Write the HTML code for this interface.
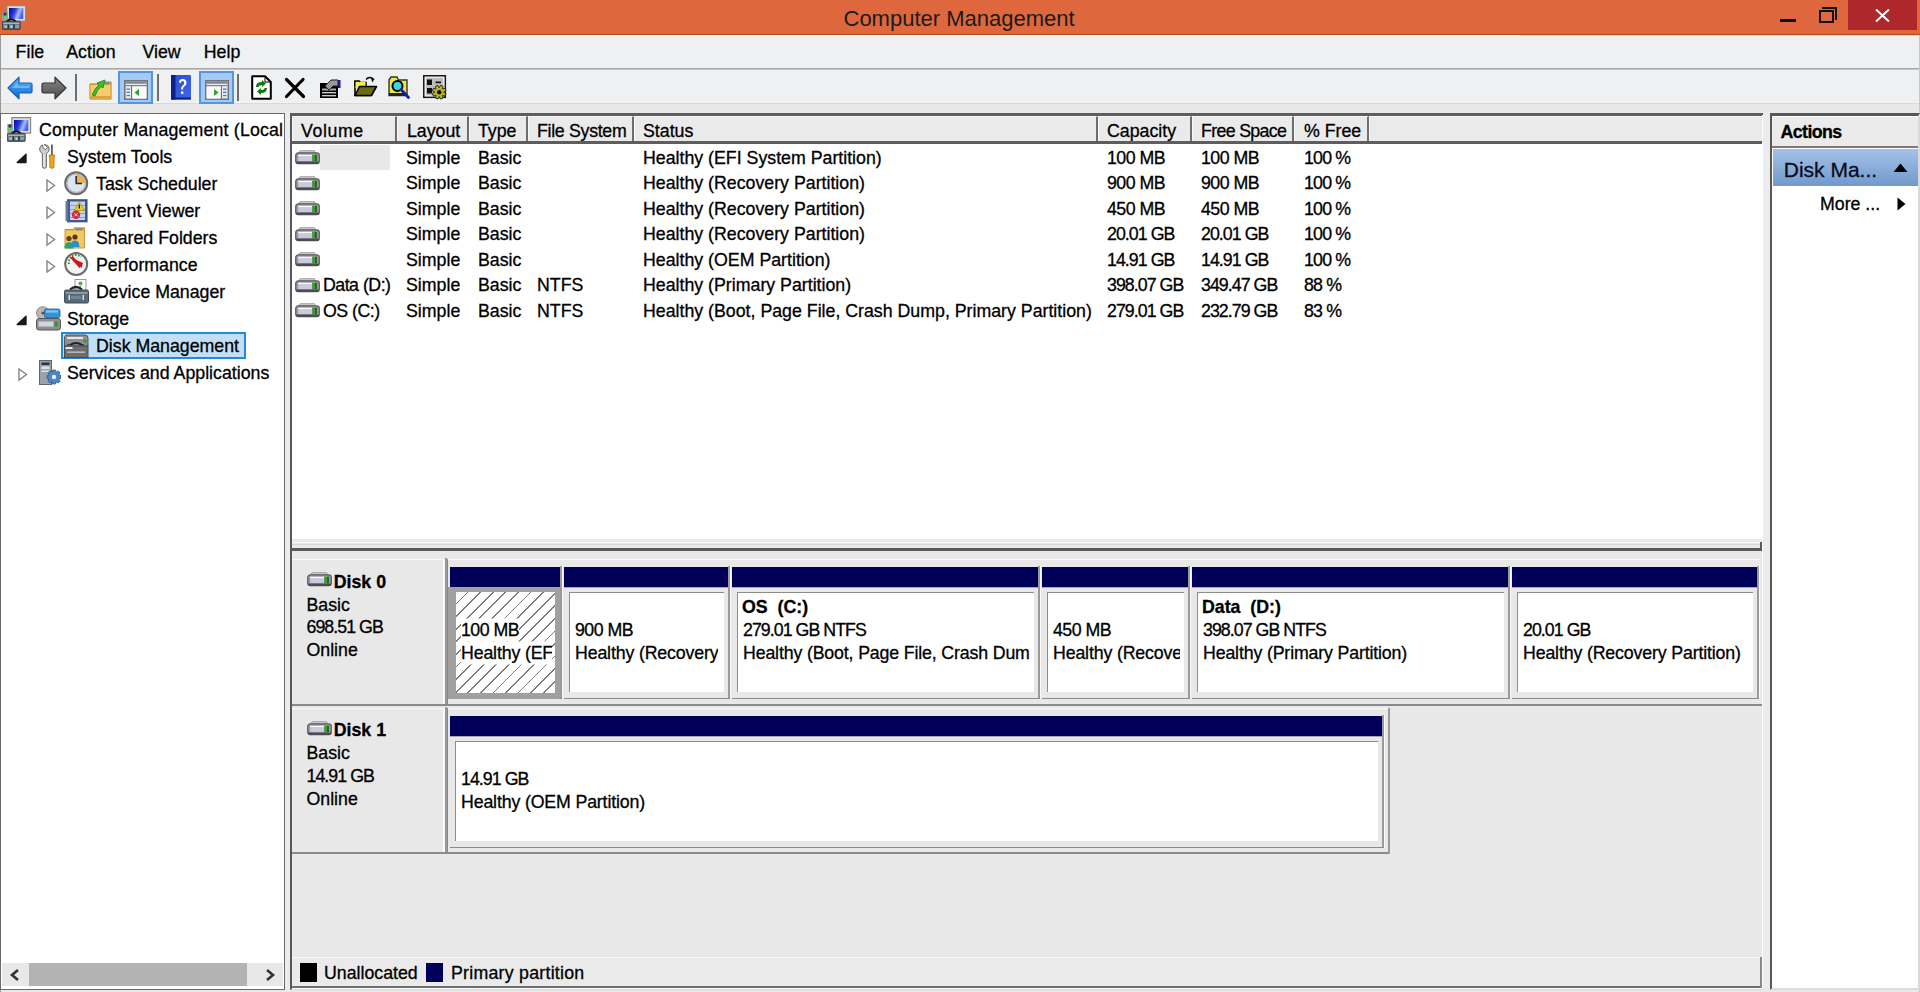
<!DOCTYPE html>
<html><head><meta charset="utf-8"><style>
html,body{margin:0;padding:0;}
body{width:1920px;height:992px;overflow:hidden;position:relative;background:#E8E8E8;font-family:"Liberation Sans",sans-serif;}
div{position:absolute;}
.t{white-space:nowrap;line-height:20px;color:#000;-webkit-text-stroke:0.3px currentColor;}
.hatch{background:repeating-linear-gradient(-45deg,#fff 0px,#fff 7.7px,#7c7c7c 7.7px,#7c7c7c 8.9px);}
.hd{width:24px;height:14px;}
.ic{width:24px;height:24px;}
</style></head><body>
<div style="position:absolute;left:0px;top:0px;width:1920px;height:35px;background:#DF673E"></div>
<div style="position:absolute;left:0px;top:34px;width:1920px;height:1px;background:#B4481F"></div>
<div class="t" style="left:843.5px;top:8.78px;font-size:22px;color:#1b1b1b;-webkit-text-stroke:0">Computer Management</div>
<div style="position:absolute;left:1780px;top:19px;width:16px;height:3px;background:#111"></div>
<div style="position:absolute;left:1822px;top:7px;width:15px;height:13px;border:2px solid #111;border-left:0;border-bottom:0;box-sizing:border-box"></div>
<div style="position:absolute;left:1819px;top:10px;width:15px;height:13px;border:2px solid #111;box-sizing:border-box;background:#DF673E"></div>
<div style="position:absolute;left:1848px;top:0px;width:69px;height:30px;background:#AD272B"></div>
<svg style="position:absolute;left:1875px;top:9px" width="15" height="13"><path d="M1 0.5L14 12.5M14 0.5L1 12.5" stroke="#fff" stroke-width="2"/></svg>
<svg style="position:absolute;left:2px;top:4.5px" width="25" height="25" viewBox="0 0 25 25">
<defs><linearGradient id="csw" x1="0" y1="0" x2="1" y2="0.3"><stop offset="0" stop-color="#06089a"/><stop offset="0.45" stop-color="#2a3ee0"/><stop offset="0.75" stop-color="#a9bff7"/><stop offset="1" stop-color="#4d62e8"/></linearGradient></defs>
<rect x="4.8" y="0.6" width="18.8" height="15.6" fill="#dcdccf" stroke="#8a8a80" stroke-width="1.2"/>
<rect x="7" y="3" width="14.3" height="11" fill="url(#csw)"/>
<rect x="0.3" y="7" width="5.5" height="9.5" fill="#9aa2a8"/>
<rect x="0.3" y="10.8" width="5.5" height="2.2" fill="#5ad25a"/>
<rect x="1.5" y="7.5" width="3" height="3" fill="#3a3a3a"/>
<path d="M4.5 17 Q9 11.8 13.8 16.5" fill="none" stroke="#151515" stroke-width="2.2"/>
<rect x="0.4" y="16.4" width="17.8" height="8.2" rx="0.8" fill="#55676e" stroke="#2e3b40" stroke-width="0.8"/>
<rect x="1.2" y="17.6" width="16.2" height="1.6" fill="#a9b6ba"/>
<rect x="1.5" y="20" width="15.6" height="3" fill="#8d9ca2"/>
<rect x="5.5" y="19.5" width="1.6" height="4" fill="#1e2a2e"/><rect x="11.2" y="19.5" width="1.6" height="4" fill="#1e2a2e"/>
<rect x="3.5" y="21" width="1.2" height="1.5" fill="#e8eef0"/><rect x="9" y="21" width="1.2" height="1.5" fill="#e8eef0"/>
</svg>
<div style="position:absolute;left:0px;top:35px;width:1920px;height:68px;background:#EEF0F2"></div>
<div style="position:absolute;left:0px;top:35px;width:1920px;height:1px;background:#F6FAFC"></div>
<div style="position:absolute;left:1520px;top:35px;width:400px;height:1px;background:#D3D9E0"></div>
<div style="position:absolute;left:0px;top:68px;width:1920px;height:1px;background:#A9A9A9"></div>
<div class="t" style="left:15.6px;top:41.60px;font-size:17.75px;color:#000;">File</div>
<div class="t" style="left:66.25px;top:41.60px;font-size:17.75px;color:#000;">Action</div>
<div class="t" style="left:142.5px;top:41.60px;font-size:17.75px;color:#000;">View</div>
<div class="t" style="left:203.75px;top:41.60px;font-size:17.75px;color:#000;">Help</div>
<div style="position:absolute;left:0px;top:103px;width:1920px;height:889px;background:#E8E8E8"></div>
<div style="position:absolute;left:0px;top:102px;width:1920px;height:1px;background:#F3F4F6"></div>
<div style="position:absolute;left:0px;top:103px;width:1920px;height:1px;background:#D9D9DB"></div>
<div style="position:absolute;left:0px;top:69px;width:1920px;height:1px;background:#C4C4C8"></div>
<div style="position:absolute;left:0px;top:35px;width:1px;height:957px;background:#9a9a9a"></div>
<div style="position:absolute;left:1919px;top:35px;width:1px;height:957px;background:#c8c8c8"></div>
<div style="position:absolute;left:118px;top:71px;width:35px;height:33px;background:#A5C9F3;border:2px solid #5596E4;box-sizing:border-box"></div>
<div style="position:absolute;left:199px;top:71px;width:35px;height:33px;background:#A5C9F3;border:2px solid #5596E4;box-sizing:border-box"></div>
<div style="position:absolute;left:75px;top:74px;width:2px;height:27px;background:#6f6f6f"></div>
<div style="position:absolute;left:157px;top:74px;width:2px;height:27px;background:#6f6f6f"></div>
<div style="position:absolute;left:237px;top:74px;width:2px;height:27px;background:#6f6f6f"></div>
<svg style="position:absolute;left:7px;top:76px" width="26" height="24" viewBox="0 0 26 24">
<defs><linearGradient id="ba" x1="0" y1="0" x2="0" y2="1"><stop offset="0" stop-color="#5fc0ff"/><stop offset="1" stop-color="#0a62cc"/></linearGradient></defs>
<path d="M1 12 L12 1.2 V7 H23.5 Q25 7 25 8.5 V15.5 Q25 17 23.5 17 H12 V22.8Z" fill="url(#ba)" stroke="#1b5fb5" stroke-width="1.2" stroke-linejoin="round"/>
<path d="M5 12 L10.5 7 V10 H22 V12Z" fill="#9fe0ff" opacity="0.5"/>
</svg>
<svg style="position:absolute;left:41px;top:76px" width="26" height="24" viewBox="0 0 26 24">
<defs><linearGradient id="fa" x1="0" y1="0" x2="0" y2="1"><stop offset="0" stop-color="#8a8a8a"/><stop offset="1" stop-color="#4a4a4a"/></linearGradient></defs>
<path d="M25 12 L14 1.2 V7 H2.5 Q1 7 1 8.5 V15.5 Q1 17 2.5 17 H14 V22.8Z" fill="url(#fa)" stroke="#353535" stroke-width="1.2" stroke-linejoin="round"/>
</svg>
<svg style="position:absolute;left:89px;top:77px" width="24" height="24" viewBox="0 0 24 24">
<path d="M1 7 H14 L15.5 5 H22 V22 H1Z" fill="#e9b14a" stroke="#b07b22" stroke-width="1"/>
<rect x="1.5" y="8" width="20" height="13.5" fill="#f6cd6a"/>
<rect x="1.5" y="19" width="20" height="2.5" fill="#d9a140"/>
<path d="M3 18 Q6 11 10 8 L8 6 L16 3 L14 11 L12 9.5 Q8 13 6 19Z" fill="#35c22a" stroke="#1d7d16" stroke-width="0.8"/>
<rect x="16" y="5.5" width="4" height="2" fill="#4a8fd8"/>
</svg>
<svg style="position:absolute;left:124px;top:80px" width="24" height="20" viewBox="0 0 24 20">
<rect x="0.8" y="0.8" width="22.5" height="18.4" fill="#e9ecef" stroke="#6b7178" stroke-width="1.5"/>
<rect x="1.5" y="1.5" width="21" height="2.2" fill="#7d838a"/>
<rect x="1.5" y="5" width="21" height="1.2" fill="#7d838a"/>
<rect x="7" y="6.2" width="1.3" height="13" fill="#6b7178"/>
<rect x="8.3" y="6.8" width="14" height="11.8" fill="#fafafa"/>
<rect x="2.5" y="8.5" width="3.5" height="1.3" fill="#3f7fd0"/><rect x="2.5" y="11.7" width="3.5" height="1.3" fill="#3f7fd0"/><rect x="2.5" y="14.9" width="3.5" height="1.3" fill="#3f7fd0"/>
<path d="M15 9 L10.5 12.5 L15 16Z" fill="#2aa52a"/></svg>
<svg style="position:absolute;left:171px;top:75px" width="20" height="25" viewBox="0 0 20 25">
<defs><linearGradient id="hb" x1="0" y1="0" x2="1" y2="1"><stop offset="0" stop-color="#2a4fd0"/><stop offset="1" stop-color="#3f66e6"/></linearGradient></defs>
<rect x="0" y="0" width="20" height="24.5" rx="1" fill="url(#hb)"/>
<rect x="0" y="0" width="4.5" height="24.5" fill="#0c1f8c"/>
<rect x="0" y="22.5" width="20" height="2" fill="#0c1f8c"/>
<path d="M8 7.5 Q8 4 11.5 4 Q15.5 4 15.5 7.8 Q15.5 10.3 13 11.8 Q12 12.5 12 14.5 H10 Q10 11.5 12 10.2 Q13.3 9.3 13.3 8 Q13.3 6 11.6 6 Q10 6 10 8Z" fill="#fff"/>
<rect x="10" y="16.5" width="2.4" height="2.4" fill="#fff"/>
</svg>
<svg style="position:absolute;left:205px;top:80px" width="24" height="20" viewBox="0 0 24 20">
<rect x="0.8" y="0.8" width="22.5" height="18.4" fill="#e9ecef" stroke="#6b7178" stroke-width="1.5"/>
<rect x="1.5" y="1.5" width="21" height="2.2" fill="#7d838a"/>
<rect x="1.5" y="5" width="21" height="1.2" fill="#7d838a"/>
<rect x="15.7" y="6.2" width="1.3" height="13" fill="#6b7178"/>
<rect x="1.6" y="6.8" width="14" height="11.8" fill="#fafafa"/>
<rect x="18" y="8.5" width="3.5" height="1.3" fill="#3f7fd0"/><rect x="18" y="11.7" width="3.5" height="1.3" fill="#3f7fd0"/><rect x="18" y="14.9" width="3.5" height="1.3" fill="#3f7fd0"/>
<path d="M9 9 L13.5 12.5 L9 16Z" fill="#2aa52a"/></svg>
<svg style="position:absolute;left:251px;top:75px" width="21" height="25" viewBox="0 0 21 25">
<path d="M1.2 1.2 H14 L19.8 7 V23.8 H1.2Z" fill="#fff" stroke="#000" stroke-width="2" stroke-linejoin="round"/>
<path d="M14 1.2 V7 H19.8" fill="none" stroke="#000" stroke-width="1"/>
<path d="M5 12 Q5 7 11 7 V5 L15 8.5 L11 12 V10 Q7.5 10 7.5 12Z" fill="#0f7a0f"/>
<path d="M16 13 Q16 18 10 18 V20 L6 16.5 L10 13 V15 Q13.5 15 13.5 13Z" fill="#0f7a0f"/>
</svg>
<svg style="position:absolute;left:284px;top:77px" width="22" height="22" viewBox="0 0 22 22">
<path d="M2.5 2.5 L19.5 19.5 M19 2.5 L2.5 19.5" stroke="#000" stroke-width="3.2" stroke-linecap="round"/>
</svg>
<svg style="position:absolute;left:319px;top:77px" width="24" height="22" viewBox="0 0 24 22">
<rect x="1" y="6" width="18" height="15" fill="#000"/>
<rect x="3" y="11.5" width="14" height="2" fill="#aaa"/>
<rect x="3" y="15" width="14" height="1.4" fill="#ccc"/>
<rect x="3" y="18" width="14" height="1.4" fill="#ccc"/>
<path d="M6 9 L12 3 L19 3 L19 9 L14 9 L10 13Z" fill="#9a9a9a" stroke="#222" stroke-width="1"/>
<rect x="19" y="3" width="2.5" height="8" fill="#1a1a8a"/>
</svg>
<svg style="position:absolute;left:354px;top:76px" width="24" height="21" viewBox="0 0 24 21">
<path d="M1 5 H5 L6.5 6.5 H12 V9 H1Z" fill="#f4f04a" stroke="#000" stroke-width="1.6"/>
<path d="M1 5 V19.5 H17" fill="none" stroke="#000" stroke-width="1.6"/>
<path d="M1.5 9 H11 V10" fill="#f4f04a"/>
<rect x="1.5" y="6" width="10" height="6" fill="#f4f04a"/>
<path d="M1 19.5 L5.5 10.5 H22.5 L17.5 19.5Z" fill="#6b6a0e" stroke="#000" stroke-width="1.6" stroke-linejoin="round"/>
<path d="M12 3.5 Q15 0 18.5 2.5" fill="none" stroke="#000" stroke-width="1.3"/>
<path d="M17 1 L20.5 3 L18.2 6.5Z" fill="#000"/>
</svg>
<svg style="position:absolute;left:388px;top:76px" width="24" height="24" viewBox="0 0 24 24">
<path d="M1 4 L3 1 H9 L10.5 4 H19 V19.5 H1Z" fill="#e7e64a" stroke="#333" stroke-width="1.4"/>
<rect x="1" y="17" width="18" height="3" fill="#222"/>
<circle cx="9.5" cy="10" r="5" fill="#3cd6e0" stroke="#000" stroke-width="2"/>
<path d="M13 13.5 L20.5 21.5" stroke="#1a1ab0" stroke-width="2.8" stroke-linecap="round"/>
</svg>
<svg style="position:absolute;left:423px;top:75px" width="25" height="25" viewBox="0 0 25 25">
<rect x="0.8" y="0.8" width="21.5" height="21.5" fill="#bdbdbd" stroke="#1a1a1a" stroke-width="1.6"/>
<rect x="2.3" y="2.3" width="18.5" height="18.5" fill="none" stroke="#f2f2f2" stroke-width="1.1"/>
<rect x="4" y="4.5" width="5" height="5.5" fill="#111"/>
<rect x="4" y="13" width="5" height="5.5" fill="#111"/>
<rect x="12.5" y="6.5" width="5.5" height="1.7" fill="#111"/>
<path d="M20.70 17.35 L23.07 18.54 L22.01 21.11 L19.48 20.28 L19.28 20.48 L20.11 23.01 L17.54 24.07 L16.35 21.70 L16.05 21.70 L14.86 24.07 L12.29 23.01 L13.12 20.48 L12.92 20.28 L10.39 21.11 L9.33 18.54 L11.70 17.35 L11.70 17.05 L9.33 15.86 L10.39 13.29 L12.92 14.12 L13.12 13.92 L12.29 11.39 L14.86 10.33 L16.05 12.70 L16.35 12.70 L17.54 10.33 L20.11 11.39 L19.28 13.92 L19.48 14.12 L22.01 13.29 L23.07 15.86 L20.70 17.05Z" fill="#bdb82a" stroke="#1a1a1a" stroke-width="0.9"/>
<circle cx="16.2" cy="17.2" r="2.2" fill="#111"/>
</svg>
<div style="position:absolute;left:0px;top:113px;width:285px;height:877px;background:#fff;border:1px solid #6a6a6a;box-sizing:border-box"></div>
<div style="position:absolute;left:2px;top:963px;width:281px;height:23px;background:#E8E8E8"></div>
<div style="position:absolute;left:29px;top:963px;width:218px;height:23px;background:#B3B3B3"></div>
<svg style="position:absolute;left:9px;top:968px" width="12" height="14"><path d="M9 2L3 7L9 12" stroke="#333" stroke-width="2.6" fill="none"/></svg>
<svg style="position:absolute;left:264px;top:968px" width="12" height="14"><path d="M3 2L9 7L3 12" stroke="#333" stroke-width="2.6" fill="none"/></svg>
<div style="position:absolute;left:1px;top:113px;width:282px;height:850px;overflow:hidden">
<div class="t" style="left:38px;top:6.85px;font-size:17.75px;color:#000;letter-spacing:0.17px">Computer Management (Local)</div>
<svg style="position:absolute;left:6px;top:4px" width="25" height="25" viewBox="0 0 25 25">
<defs><linearGradient id="csa" x1="0" y1="0" x2="1" y2="0.3"><stop offset="0" stop-color="#06089a"/><stop offset="0.45" stop-color="#2a3ee0"/><stop offset="0.75" stop-color="#a9bff7"/><stop offset="1" stop-color="#4d62e8"/></linearGradient></defs>
<rect x="4.8" y="0.6" width="18.8" height="15.6" fill="#dcdccf" stroke="#8a8a80" stroke-width="1.2"/>
<rect x="7" y="3" width="14.3" height="11" fill="url(#csa)"/>
<rect x="0.3" y="7" width="5.5" height="9.5" fill="#9aa2a8"/>
<rect x="0.3" y="10.8" width="5.5" height="2.2" fill="#5ad25a"/>
<rect x="1.5" y="7.5" width="3" height="3" fill="#3a3a3a"/>
<path d="M4.5 17 Q9 11.8 13.8 16.5" fill="none" stroke="#151515" stroke-width="2.2"/>
<rect x="0.4" y="16.4" width="17.8" height="8.2" rx="0.8" fill="#55676e" stroke="#2e3b40" stroke-width="0.8"/>
<rect x="1.2" y="17.6" width="16.2" height="1.6" fill="#a9b6ba"/>
<rect x="1.5" y="20" width="15.6" height="3" fill="#8d9ca2"/>
<rect x="5.5" y="19.5" width="1.6" height="4" fill="#1e2a2e"/><rect x="11.2" y="19.5" width="1.6" height="4" fill="#1e2a2e"/>
<rect x="3.5" y="21" width="1.2" height="1.5" fill="#e8eef0"/><rect x="9" y="21" width="1.2" height="1.5" fill="#e8eef0"/>
</svg>
<div class="t" style="left:66px;top:33.85px;font-size:17.75px;color:#000;">System Tools</div>
<svg style="position:absolute;left:15px;top:39.5px" width="12" height="11"><path d="M10 1.2L10 9.6L1.2 9.6Z" fill="#1a1a1a" stroke="#1a1a1a" stroke-width="1.4" stroke-linejoin="round"/></svg>
<svg style="position:absolute;left:38px;top:31px" width="18" height="25" viewBox="0 0 18 25">
<path d="M5.2 0.6 Q9.8 0.6 10.2 5 Q10.2 8.2 7.4 9.6 V22.6 Q7.4 24.3 5.4 24.3 Q3.4 24.3 3.4 22.6 V9.6 Q0.6 8.2 0.6 5 Q0.9 1.6 3.6 0.9 L4.2 4.2 L6.4 5.6 L8.6 3.2Z" fill="#cdcdcd" stroke="#6a6a6a" stroke-width="1"/>
<rect x="4.4" y="10.5" width="1.3" height="12" fill="#f0f0f0"/>
<rect x="12" y="0.5" width="1.8" height="11" fill="#5f5f5f"/>
<path d="M10.3 11 H15.5 V13.5 H15 V23 Q15 24.3 12.9 24.3 Q10.8 24.3 10.8 23 V13.5 H10.3Z" fill="#f0a51a" stroke="#b76d00" stroke-width="0.8"/>
</svg>
<div class="t" style="left:95px;top:60.85px;font-size:17.75px;color:#000;">Task Scheduler</div>
<svg style="position:absolute;left:45px;top:66px" width="10" height="14"><path d="M1 1L8.5 6.5L1 12Z" fill="none" stroke="#858585" stroke-width="1.4"/></svg>
<svg style="position:absolute;left:63px;top:58px" width="25" height="25" viewBox="0 0 25 25">
<circle cx="12.2" cy="12.2" r="11" fill="#dce6f0" stroke="#6b6b6b" stroke-width="2"/>
<circle cx="12.2" cy="12.2" r="9.2" fill="none" stroke="#a9a9a9" stroke-width="1"/>
<path d="M12.2 12.2 V3 A9.2 9.2 0 0 1 21.4 12.2Z" fill="#e6b45c"/>
<path d="M12.2 5 V12.5 H18" fill="none" stroke="#2a2a2a" stroke-width="1.6"/>
</svg>
<div class="t" style="left:95px;top:87.85px;font-size:17.75px;color:#000;">Event Viewer</div>
<svg style="position:absolute;left:45px;top:93px" width="10" height="14"><path d="M1 1L8.5 6.5L1 12Z" fill="none" stroke="#858585" stroke-width="1.4"/></svg>
<svg style="position:absolute;left:64px;top:86px" width="23" height="24" viewBox="0 0 23 24">
<rect x="2.5" y="0.8" width="19.5" height="22" fill="#3d5c9b" stroke="#2c477c" stroke-width="1"/>
<rect x="5" y="2.5" width="15" height="18.5" fill="#c6d3ea"/>
<rect x="5" y="6" width="15" height="1" fill="#8aa0c8"/><rect x="5" y="10" width="15" height="1" fill="#8aa0c8"/><rect x="5" y="14" width="15" height="1" fill="#8aa0c8"/><rect x="5" y="18" width="15" height="1" fill="#8aa0c8"/>
<rect x="0.5" y="2" width="2.5" height="20" fill="#6a7a90"/>
<path d="M14.3 3 L19.5 11.5 H9Z" fill="#e4cf2e" stroke="#9a8a10" stroke-width="0.7"/>
<rect x="13.6" y="5.5" width="1.4" height="4" fill="#222"/>
<circle cx="11" cy="15.8" r="4.2" fill="#d42a38"/>
<path d="M9.5 14.3 L12.5 17.3 M12.5 14.3 L9.5 17.3" stroke="#fff" stroke-width="1"/>
</svg>
<div class="t" style="left:95px;top:114.85px;font-size:17.75px;color:#000;">Shared Folders</div>
<svg style="position:absolute;left:45px;top:120px" width="10" height="14"><path d="M1 1L8.5 6.5L1 12Z" fill="none" stroke="#858585" stroke-width="1.4"/></svg>
<svg style="position:absolute;left:63px;top:114px" width="22" height="23" viewBox="0 0 22 23">
<path d="M1 2.5 H9 L10.5 0.8 H20.5 V21 H1Z" fill="#d9a543" stroke="#b88425" stroke-width="0.8"/>
<rect x="1.5" y="3.5" width="18.5" height="17" fill="#f3c95f"/>
<rect x="12" y="1.5" width="6" height="1.8" fill="#4a8fd8"/>
<circle cx="5" cy="11.5" r="2.6" fill="#6b3a1e"/>
<path d="M0.5 21.5 Q0.5 15 5 15 Q9.5 15 9.5 21.5Z" fill="#2aa860"/>
<circle cx="11" cy="10" r="2.6" fill="#5b3418"/>
<path d="M6.5 20 Q6.5 13.5 11 13.5 Q15.5 13.5 15.5 20Z" fill="#2f8ed0"/>
</svg>
<div class="t" style="left:95px;top:141.85px;font-size:17.75px;color:#000;">Performance</div>
<svg style="position:absolute;left:45px;top:147px" width="10" height="14"><path d="M1 1L8.5 6.5L1 12Z" fill="none" stroke="#858585" stroke-width="1.4"/></svg>
<svg style="position:absolute;left:63px;top:139px" width="25" height="25" viewBox="0 0 25 25">
<circle cx="12.2" cy="12" r="11" fill="#f4f4f4" stroke="#6b6b6b" stroke-width="2"/>
<path d="M5 12 A7.2 7.2 0 0 1 17 5" fill="none" stroke="#3a8a3a" stroke-width="2" stroke-dasharray="1.5 1.5"/>
<path d="M7 5.5 L17.5 16 L19 11 Z" fill="#d0161e"/>
<path d="M7.5 5 L16.5 15" stroke="#d0161e" stroke-width="3"/>
</svg>
<div class="t" style="left:95px;top:168.85px;font-size:17.75px;color:#000;">Device Manager</div>
<svg style="position:absolute;left:63px;top:166px" width="25" height="25" viewBox="0 0 25 25">
<rect x="11" y="0.5" width="11" height="13" fill="#fff" stroke="#9a9a9a" stroke-width="1"/>
<circle cx="16.5" cy="4.5" r="2" fill="#3db33d"/>
<rect x="15.8" y="5" width="1.4" height="7" fill="#9ac09a"/>
<path d="M6 10.5 Q12 5.5 18 10.5" fill="none" stroke="#222" stroke-width="2.2"/>
<rect x="0.5" y="11" width="24" height="13" rx="1.5" fill="#576a78" stroke="#3e4c57" stroke-width="1"/>
<rect x="1.5" y="13" width="22" height="2" fill="#8a9aa6"/>
<rect x="4.5" y="16" width="1.5" height="5" fill="#d8dde2"/><rect x="18.5" y="16" width="1.5" height="5" fill="#d8dde2"/>
<rect x="7" y="17" width="10" height="3" fill="#74858f"/>
</svg>
<div class="t" style="left:66px;top:195.85px;font-size:17.75px;color:#000;">Storage</div>
<svg style="position:absolute;left:15px;top:201.5px" width="12" height="11"><path d="M10 1.2L10 9.6L1.2 9.6Z" fill="#1a1a1a" stroke="#1a1a1a" stroke-width="1.4" stroke-linejoin="round"/></svg>
<svg style="position:absolute;left:35px;top:193px" width="25" height="25" viewBox="0 0 25 25">
<circle cx="6.8" cy="7" r="6.3" fill="#b8b8b8" stroke="#777" stroke-width="0.8"/>
<circle cx="6.8" cy="7" r="1.5" fill="#555"/>
<rect x="8.5" y="3" width="15.5" height="8.5" rx="1.5" fill="#2f95d6" stroke="#1b5f96" stroke-width="0.8"/>
<rect x="10" y="4.3" width="12" height="2.3" fill="#7fc8f0"/>
<path d="M3 12.5 H22 Q24.5 12.5 24.5 15 V21.5 Q24.5 24 22 24 H3 Q0.5 24 0.5 21.5 V15 Q0.5 12.5 3 12.5Z" fill="#8f8f8f" stroke="#555" stroke-width="1"/>
<rect x="2.5" y="15.5" width="15" height="5" fill="#d3d6e2"/>
<rect x="18.5" y="15.5" width="3.3" height="5" fill="#2f9b2f"/>
</svg>
<div style="position:absolute;left:60px;top:218.5px;width:185px;height:27.5px;background:#C1E0F8;border:2px solid #258AD6;box-sizing:border-box"></div>
<div class="t" style="left:95px;top:222.85px;font-size:17.75px;color:#000;">Disk Management</div>
<svg style="position:absolute;left:63px;top:221px" width="25" height="24" viewBox="0 0 25 24">
<path d="M3 1 H21 Q24 1 24 4 V12 H0.5 V4 Q0.5 1 3 1Z" fill="#8f8f8f" stroke="#555" stroke-width="1"/>
<rect x="3" y="3" width="16" height="2" fill="#e6e6e6"/>
<rect x="19.5" y="5.5" width="3" height="3" fill="#2f9b2f"/>
<path d="M6 11 Q12 7 18 11" fill="none" stroke="#222" stroke-width="2"/>
<rect x="3.5" y="10" width="2" height="1.5" fill="#2a2a9a"/><rect x="18" y="10" width="2" height="1.5" fill="#2a2a9a"/>
<rect x="0.5" y="12" width="23.5" height="11.5" fill="#6d6d6d" stroke="#4a4a4a" stroke-width="1"/>
<rect x="1.5" y="13" width="7" height="2" fill="#e8e8e8"/>
<rect x="3" y="17.5" width="18" height="1.3" fill="#c8c8c8"/>
</svg>
<div class="t" style="left:66px;top:249.85px;font-size:17.75px;color:#000;">Services and Applications</div>
<svg style="position:absolute;left:17px;top:255px" width="10" height="14"><path d="M1 1L8.5 6.5L1 12Z" fill="none" stroke="#858585" stroke-width="1.4"/></svg>
<svg style="position:absolute;left:38px;top:247px" width="22" height="25" viewBox="0 0 22 25">
<rect x="0.5" y="0.5" width="12" height="24" fill="#9aa3aa" stroke="#5c656c" stroke-width="1"/>
<rect x="2.5" y="2.5" width="8" height="2.5" fill="#2e3438"/>
<rect x="2.5" y="6.5" width="8" height="2.5" fill="#dfe3e6"/>
<rect x="2.5" y="10.5" width="8" height="1.5" fill="#dfe3e6"/>
<g transform="translate(15,17)"><path d="M-1.5 -7 H1.5 L2 -4.8 L4.3 -6 L6 -4.3 L4.8 -2 L7 -1.5 V1.5 L4.8 2 L6 4.3 L4.3 6 L2 4.8 L1.5 7 H-1.5 L-2 4.8 L-4.3 6 L-6 4.3 L-4.8 2 L-7 1.5 V-1.5 L-4.8 -2 L-6 -4.3 L-4.3 -6 L-2 -4.8Z" fill="#4f84c8" stroke="#2d5a94" stroke-width="0.8"/><circle r="2.2" fill="#e9f0fa"/></g>
</svg>
</div>
<div style="position:absolute;left:285px;top:112px;width:5px;height:878px;background:#ECECF0"></div>
<div style="position:absolute;left:1763px;top:112px;width:7px;height:878px;background:#ECECF0"></div>
<div style="position:absolute;left:290px;top:113px;width:1473px;height:877px;background:#fff;border-left:2px solid #575757;border-top:2px solid #575757;border-bottom:1px solid #dcdcdc;box-sizing:border-box"></div>
<div style="position:absolute;left:292px;top:116px;width:1470px;height:25px;background:#EAEAEA"></div>
<div style="position:absolute;left:292px;top:113px;width:1470px;height:3px;background:#5e5e5e"></div>
<div style="position:absolute;left:292px;top:116px;width:105px;height:25px;border-top:1px solid #f8f8f8;border-left:1px solid #f8f8f8;border-right:2px solid #6e6e6e;box-sizing:border-box"></div>
<div class="t" style="left:301px;top:120.85px;font-size:17.75px;color:#000;letter-spacing:0.6px">Volume</div>
<div style="position:absolute;left:397px;top:116px;width:72px;height:25px;border-top:1px solid #f8f8f8;border-left:1px solid #f8f8f8;border-right:2px solid #6e6e6e;box-sizing:border-box"></div>
<div class="t" style="left:407px;top:120.85px;font-size:17.75px;color:#000;">Layout</div>
<div style="position:absolute;left:469px;top:116px;width:59px;height:25px;border-top:1px solid #f8f8f8;border-left:1px solid #f8f8f8;border-right:2px solid #6e6e6e;box-sizing:border-box"></div>
<div class="t" style="left:478px;top:120.85px;font-size:17.75px;color:#000;">Type</div>
<div style="position:absolute;left:528px;top:116px;width:106px;height:25px;border-top:1px solid #f8f8f8;border-left:1px solid #f8f8f8;border-right:2px solid #6e6e6e;box-sizing:border-box"></div>
<div class="t" style="left:537px;top:120.85px;font-size:17.75px;color:#000;letter-spacing:-0.3px">File System</div>
<div style="position:absolute;left:634px;top:116px;width:464px;height:25px;border-top:1px solid #f8f8f8;border-left:1px solid #f8f8f8;border-right:2px solid #6e6e6e;box-sizing:border-box"></div>
<div class="t" style="left:643px;top:120.85px;font-size:17.75px;color:#000;">Status</div>
<div style="position:absolute;left:1098px;top:116px;width:94px;height:25px;border-top:1px solid #f8f8f8;border-left:1px solid #f8f8f8;border-right:2px solid #6e6e6e;box-sizing:border-box"></div>
<div class="t" style="left:1107px;top:120.85px;font-size:17.75px;color:#000;">Capacity</div>
<div style="position:absolute;left:1192px;top:116px;width:102px;height:25px;border-top:1px solid #f8f8f8;border-left:1px solid #f8f8f8;border-right:2px solid #6e6e6e;box-sizing:border-box"></div>
<div class="t" style="left:1201px;top:120.85px;font-size:17.75px;color:#000;letter-spacing:-0.65px">Free Space</div>
<div style="position:absolute;left:1294px;top:116px;width:75px;height:25px;border-top:1px solid #f8f8f8;border-left:1px solid #f8f8f8;border-right:2px solid #6e6e6e;box-sizing:border-box"></div>
<div class="t" style="left:1304px;top:120.85px;font-size:17.75px;color:#000;">% Free</div>
<div style="position:absolute;left:1369px;top:116px;width:393px;height:25px;border-top:1px solid #f8f8f8;border-left:1px solid #f8f8f8;box-sizing:border-box"></div>
<div style="position:absolute;left:292px;top:141px;width:1470px;height:3px;background:#5e5e5e"></div>
<div style="position:absolute;left:320px;top:145px;width:70px;height:25px;background:#E8E8E8"></div>
<svg style="position:absolute;left:295px;top:150px" width="25" height="15" viewBox="0 0 25 15">
<path d="M5 0.6 H19.5 L21 3.2 H3.5Z" fill="#c9c9c9" stroke="#9c9c9c" stroke-width="0.8"/>
<rect x="0.7" y="2.9" width="23.6" height="10.6" rx="2.6" fill="#9a9a9c" stroke="#5c5c60" stroke-width="1.2"/>
<rect x="3.2" y="4.8" width="14" height="6.4" fill="#c9cbdc"/>
<rect x="3.2" y="4.8" width="14" height="1.3" fill="#fbfbff"/>
<rect x="17.2" y="4.8" width="4.6" height="6.4" fill="#3c9a3c"/>
<rect x="20.2" y="4.8" width="1.6" height="6.4" fill="#1c5e1c"/>
<path d="M0.7 11.5 H24.3 Q24.3 14.2 21.8 14.2 H3.2 Q0.7 14.2 0.7 11.5Z" fill="#4c4c56"/>
</svg>
<div class="t" style="left:406px;top:147.60px;font-size:17.75px;color:#000;">Simple</div>
<div class="t" style="left:478px;top:147.60px;font-size:17.75px;color:#000;">Basic</div>
<div class="t" style="left:643px;top:147.60px;font-size:17.75px;color:#000;">Healthy (EFI System Partition)</div>
<div class="t" style="left:1107px;top:147.60px;font-size:17.75px;color:#000;letter-spacing:-0.5px">100 MB</div>
<div class="t" style="left:1201px;top:147.60px;font-size:17.75px;color:#000;letter-spacing:-0.5px">100 MB</div>
<div class="t" style="left:1304px;top:147.60px;font-size:17.75px;color:#000;letter-spacing:-0.8px">100 %</div>
<svg style="position:absolute;left:295px;top:176px" width="25" height="15" viewBox="0 0 25 15">
<path d="M5 0.6 H19.5 L21 3.2 H3.5Z" fill="#c9c9c9" stroke="#9c9c9c" stroke-width="0.8"/>
<rect x="0.7" y="2.9" width="23.6" height="10.6" rx="2.6" fill="#9a9a9c" stroke="#5c5c60" stroke-width="1.2"/>
<rect x="3.2" y="4.8" width="14" height="6.4" fill="#c9cbdc"/>
<rect x="3.2" y="4.8" width="14" height="1.3" fill="#fbfbff"/>
<rect x="17.2" y="4.8" width="4.6" height="6.4" fill="#3c9a3c"/>
<rect x="20.2" y="4.8" width="1.6" height="6.4" fill="#1c5e1c"/>
<path d="M0.7 11.5 H24.3 Q24.3 14.2 21.8 14.2 H3.2 Q0.7 14.2 0.7 11.5Z" fill="#4c4c56"/>
</svg>
<div class="t" style="left:406px;top:173.10px;font-size:17.75px;color:#000;">Simple</div>
<div class="t" style="left:478px;top:173.10px;font-size:17.75px;color:#000;">Basic</div>
<div class="t" style="left:643px;top:173.10px;font-size:17.75px;color:#000;">Healthy (Recovery Partition)</div>
<div class="t" style="left:1107px;top:173.10px;font-size:17.75px;color:#000;letter-spacing:-0.5px">900 MB</div>
<div class="t" style="left:1201px;top:173.10px;font-size:17.75px;color:#000;letter-spacing:-0.5px">900 MB</div>
<div class="t" style="left:1304px;top:173.10px;font-size:17.75px;color:#000;letter-spacing:-0.8px">100 %</div>
<svg style="position:absolute;left:295px;top:201px" width="25" height="15" viewBox="0 0 25 15">
<path d="M5 0.6 H19.5 L21 3.2 H3.5Z" fill="#c9c9c9" stroke="#9c9c9c" stroke-width="0.8"/>
<rect x="0.7" y="2.9" width="23.6" height="10.6" rx="2.6" fill="#9a9a9c" stroke="#5c5c60" stroke-width="1.2"/>
<rect x="3.2" y="4.8" width="14" height="6.4" fill="#c9cbdc"/>
<rect x="3.2" y="4.8" width="14" height="1.3" fill="#fbfbff"/>
<rect x="17.2" y="4.8" width="4.6" height="6.4" fill="#3c9a3c"/>
<rect x="20.2" y="4.8" width="1.6" height="6.4" fill="#1c5e1c"/>
<path d="M0.7 11.5 H24.3 Q24.3 14.2 21.8 14.2 H3.2 Q0.7 14.2 0.7 11.5Z" fill="#4c4c56"/>
</svg>
<div class="t" style="left:406px;top:198.60px;font-size:17.75px;color:#000;">Simple</div>
<div class="t" style="left:478px;top:198.60px;font-size:17.75px;color:#000;">Basic</div>
<div class="t" style="left:643px;top:198.60px;font-size:17.75px;color:#000;">Healthy (Recovery Partition)</div>
<div class="t" style="left:1107px;top:198.60px;font-size:17.75px;color:#000;letter-spacing:-0.5px">450 MB</div>
<div class="t" style="left:1201px;top:198.60px;font-size:17.75px;color:#000;letter-spacing:-0.5px">450 MB</div>
<div class="t" style="left:1304px;top:198.60px;font-size:17.75px;color:#000;letter-spacing:-0.8px">100 %</div>
<svg style="position:absolute;left:295px;top:227px" width="25" height="15" viewBox="0 0 25 15">
<path d="M5 0.6 H19.5 L21 3.2 H3.5Z" fill="#c9c9c9" stroke="#9c9c9c" stroke-width="0.8"/>
<rect x="0.7" y="2.9" width="23.6" height="10.6" rx="2.6" fill="#9a9a9c" stroke="#5c5c60" stroke-width="1.2"/>
<rect x="3.2" y="4.8" width="14" height="6.4" fill="#c9cbdc"/>
<rect x="3.2" y="4.8" width="14" height="1.3" fill="#fbfbff"/>
<rect x="17.2" y="4.8" width="4.6" height="6.4" fill="#3c9a3c"/>
<rect x="20.2" y="4.8" width="1.6" height="6.4" fill="#1c5e1c"/>
<path d="M0.7 11.5 H24.3 Q24.3 14.2 21.8 14.2 H3.2 Q0.7 14.2 0.7 11.5Z" fill="#4c4c56"/>
</svg>
<div class="t" style="left:406px;top:224.10px;font-size:17.75px;color:#000;">Simple</div>
<div class="t" style="left:478px;top:224.10px;font-size:17.75px;color:#000;">Basic</div>
<div class="t" style="left:643px;top:224.10px;font-size:17.75px;color:#000;">Healthy (Recovery Partition)</div>
<div class="t" style="left:1107px;top:224.10px;font-size:17.75px;color:#000;letter-spacing:-0.95px">20.01 GB</div>
<div class="t" style="left:1201px;top:224.10px;font-size:17.75px;color:#000;letter-spacing:-0.95px">20.01 GB</div>
<div class="t" style="left:1304px;top:224.10px;font-size:17.75px;color:#000;letter-spacing:-0.8px">100 %</div>
<svg style="position:absolute;left:295px;top:252px" width="25" height="15" viewBox="0 0 25 15">
<path d="M5 0.6 H19.5 L21 3.2 H3.5Z" fill="#c9c9c9" stroke="#9c9c9c" stroke-width="0.8"/>
<rect x="0.7" y="2.9" width="23.6" height="10.6" rx="2.6" fill="#9a9a9c" stroke="#5c5c60" stroke-width="1.2"/>
<rect x="3.2" y="4.8" width="14" height="6.4" fill="#c9cbdc"/>
<rect x="3.2" y="4.8" width="14" height="1.3" fill="#fbfbff"/>
<rect x="17.2" y="4.8" width="4.6" height="6.4" fill="#3c9a3c"/>
<rect x="20.2" y="4.8" width="1.6" height="6.4" fill="#1c5e1c"/>
<path d="M0.7 11.5 H24.3 Q24.3 14.2 21.8 14.2 H3.2 Q0.7 14.2 0.7 11.5Z" fill="#4c4c56"/>
</svg>
<div class="t" style="left:406px;top:249.60px;font-size:17.75px;color:#000;">Simple</div>
<div class="t" style="left:478px;top:249.60px;font-size:17.75px;color:#000;">Basic</div>
<div class="t" style="left:643px;top:249.60px;font-size:17.75px;color:#000;">Healthy (OEM Partition)</div>
<div class="t" style="left:1107px;top:249.60px;font-size:17.75px;color:#000;letter-spacing:-0.95px">14.91 GB</div>
<div class="t" style="left:1201px;top:249.60px;font-size:17.75px;color:#000;letter-spacing:-0.95px">14.91 GB</div>
<div class="t" style="left:1304px;top:249.60px;font-size:17.75px;color:#000;letter-spacing:-0.8px">100 %</div>
<svg style="position:absolute;left:295px;top:278px" width="25" height="15" viewBox="0 0 25 15">
<path d="M5 0.6 H19.5 L21 3.2 H3.5Z" fill="#c9c9c9" stroke="#9c9c9c" stroke-width="0.8"/>
<rect x="0.7" y="2.9" width="23.6" height="10.6" rx="2.6" fill="#9a9a9c" stroke="#5c5c60" stroke-width="1.2"/>
<rect x="3.2" y="4.8" width="14" height="6.4" fill="#c9cbdc"/>
<rect x="3.2" y="4.8" width="14" height="1.3" fill="#fbfbff"/>
<rect x="17.2" y="4.8" width="4.6" height="6.4" fill="#3c9a3c"/>
<rect x="20.2" y="4.8" width="1.6" height="6.4" fill="#1c5e1c"/>
<path d="M0.7 11.5 H24.3 Q24.3 14.2 21.8 14.2 H3.2 Q0.7 14.2 0.7 11.5Z" fill="#4c4c56"/>
</svg>
<div class="t" style="left:323px;top:275.10px;font-size:17.75px;color:#000;letter-spacing:-0.5px">Data (D:)</div>
<div class="t" style="left:406px;top:275.10px;font-size:17.75px;color:#000;">Simple</div>
<div class="t" style="left:478px;top:275.10px;font-size:17.75px;color:#000;">Basic</div>
<div class="t" style="left:537px;top:275.10px;font-size:17.75px;color:#000;">NTFS</div>
<div class="t" style="left:643px;top:275.10px;font-size:17.75px;color:#000;">Healthy (Primary Partition)</div>
<div class="t" style="left:1107px;top:275.10px;font-size:17.75px;color:#000;letter-spacing:-0.95px">398.07 GB</div>
<div class="t" style="left:1201px;top:275.10px;font-size:17.75px;color:#000;letter-spacing:-0.95px">349.47 GB</div>
<div class="t" style="left:1304px;top:275.10px;font-size:17.75px;color:#000;letter-spacing:-0.8px">88 %</div>
<svg style="position:absolute;left:295px;top:303px" width="25" height="15" viewBox="0 0 25 15">
<path d="M5 0.6 H19.5 L21 3.2 H3.5Z" fill="#c9c9c9" stroke="#9c9c9c" stroke-width="0.8"/>
<rect x="0.7" y="2.9" width="23.6" height="10.6" rx="2.6" fill="#9a9a9c" stroke="#5c5c60" stroke-width="1.2"/>
<rect x="3.2" y="4.8" width="14" height="6.4" fill="#c9cbdc"/>
<rect x="3.2" y="4.8" width="14" height="1.3" fill="#fbfbff"/>
<rect x="17.2" y="4.8" width="4.6" height="6.4" fill="#3c9a3c"/>
<rect x="20.2" y="4.8" width="1.6" height="6.4" fill="#1c5e1c"/>
<path d="M0.7 11.5 H24.3 Q24.3 14.2 21.8 14.2 H3.2 Q0.7 14.2 0.7 11.5Z" fill="#4c4c56"/>
</svg>
<div class="t" style="left:323px;top:300.60px;font-size:17.75px;color:#000;letter-spacing:-0.5px">OS (C:)</div>
<div class="t" style="left:406px;top:300.60px;font-size:17.75px;color:#000;">Simple</div>
<div class="t" style="left:478px;top:300.60px;font-size:17.75px;color:#000;">Basic</div>
<div class="t" style="left:537px;top:300.60px;font-size:17.75px;color:#000;">NTFS</div>
<div class="t" style="left:643px;top:300.60px;font-size:17.75px;color:#000;">Healthy (Boot, Page File, Crash Dump, Primary Partition)</div>
<div class="t" style="left:1107px;top:300.60px;font-size:17.75px;color:#000;letter-spacing:-0.95px">279.01 GB</div>
<div class="t" style="left:1201px;top:300.60px;font-size:17.75px;color:#000;letter-spacing:-0.95px">232.79 GB</div>
<div class="t" style="left:1304px;top:300.60px;font-size:17.75px;color:#000;letter-spacing:-0.8px">83 %</div>
<div style="position:absolute;left:292px;top:539px;width:1470px;height:12px;background:#E9E9E9"></div>
<div style="position:absolute;left:292px;top:542px;width:1470px;height:1px;background:#fafafa"></div>
<div style="position:absolute;left:292px;top:544px;width:1470px;height:1px;background:#D8D8D8"></div>
<div style="position:absolute;left:292px;top:548px;width:1470px;height:3px;background:#5a5a5a"></div>
<div style="position:absolute;left:1760px;top:542px;width:2px;height:8px;background:#5a5a5a"></div>
<div style="position:absolute;left:292px;top:551px;width:1470px;height:407px;background:#E8E8E8"></div>
<div style="position:absolute;left:292px;top:957px;width:1470px;height:29px;background:#EAEAEA;border-top:1px solid #f8f8f8;box-sizing:border-box"></div>
<div style="position:absolute;left:292px;top:986px;width:1470px;height:2px;background:#6e6e6e"></div>
<div style="position:absolute;left:1760px;top:957px;width:2px;height:31px;background:#8a8a8a"></div>
<div style="position:absolute;left:300px;top:962.5px;width:17px;height:19px;background:#000"></div>
<div class="t" style="left:324px;top:962.85px;font-size:17.75px;color:#000;">Unallocated</div>
<div style="position:absolute;left:426px;top:962.5px;width:17px;height:19px;background:#000058"></div>
<div class="t" style="left:451px;top:962.85px;font-size:17.75px;color:#000;letter-spacing:0.25px">Primary partition</div>
<div style="position:absolute;left:292px;top:559px;width:155px;height:1px;background:#fafafa"></div>
<div style="position:absolute;left:443px;top:559px;width:2px;height:145px;background:#fafafa"></div>
<div style="position:absolute;left:445px;top:558px;width:2px;height:146px;background:#9a9a9a"></div>
<div style="position:absolute;left:292px;top:704px;width:1470px;height:2px;background:#8a8a8a"></div>
<svg style="position:absolute;left:307px;top:572px" width="25" height="15" viewBox="0 0 25 15">
<path d="M5 0.6 H19.5 L21 3.2 H3.5Z" fill="#c9c9c9" stroke="#9c9c9c" stroke-width="0.8"/>
<rect x="0.7" y="2.9" width="23.6" height="10.6" rx="2.6" fill="#9a9a9c" stroke="#5c5c60" stroke-width="1.2"/>
<rect x="3.2" y="4.8" width="14" height="6.4" fill="#c9cbdc"/>
<rect x="3.2" y="4.8" width="14" height="1.3" fill="#fbfbff"/>
<rect x="17.2" y="4.8" width="4.6" height="6.4" fill="#3c9a3c"/>
<rect x="20.2" y="4.8" width="1.6" height="6.4" fill="#1c5e1c"/>
<path d="M0.7 11.5 H24.3 Q24.3 14.2 21.8 14.2 H3.2 Q0.7 14.2 0.7 11.5Z" fill="#4c4c56"/>
</svg>
<div class="t" style="left:333.75px;top:571.85px;font-size:17.75px;font-weight:bold;color:#000;">Disk 0</div>
<div class="t" style="left:306.5px;top:594.85px;font-size:17.75px;color:#000;">Basic</div>
<div class="t" style="left:306.5px;top:616.85px;font-size:17.75px;color:#000;letter-spacing:-0.95px">698.51 GB</div>
<div class="t" style="left:306.5px;top:639.60px;font-size:17.75px;color:#000;">Online</div>
<div style="position:absolute;left:292px;top:708px;width:155px;height:1px;background:#fafafa"></div>
<div style="position:absolute;left:443px;top:708px;width:2px;height:144px;background:#fafafa"></div>
<div style="position:absolute;left:445px;top:707px;width:2px;height:145px;background:#9a9a9a"></div>
<div style="position:absolute;left:292px;top:852px;width:1098px;height:2px;background:#8a8a8a"></div>
<svg style="position:absolute;left:307px;top:721px" width="25" height="15" viewBox="0 0 25 15">
<path d="M5 0.6 H19.5 L21 3.2 H3.5Z" fill="#c9c9c9" stroke="#9c9c9c" stroke-width="0.8"/>
<rect x="0.7" y="2.9" width="23.6" height="10.6" rx="2.6" fill="#9a9a9c" stroke="#5c5c60" stroke-width="1.2"/>
<rect x="3.2" y="4.8" width="14" height="6.4" fill="#c9cbdc"/>
<rect x="3.2" y="4.8" width="14" height="1.3" fill="#fbfbff"/>
<rect x="17.2" y="4.8" width="4.6" height="6.4" fill="#3c9a3c"/>
<rect x="20.2" y="4.8" width="1.6" height="6.4" fill="#1c5e1c"/>
<path d="M0.7 11.5 H24.3 Q24.3 14.2 21.8 14.2 H3.2 Q0.7 14.2 0.7 11.5Z" fill="#4c4c56"/>
</svg>
<div class="t" style="left:333.75px;top:720.15px;font-size:17.75px;font-weight:bold;color:#000;">Disk 1</div>
<div class="t" style="left:306.5px;top:742.85px;font-size:17.75px;color:#000;">Basic</div>
<div class="t" style="left:306.5px;top:765.85px;font-size:17.75px;color:#000;letter-spacing:-0.95px">14.91 GB</div>
<div class="t" style="left:306.5px;top:788.85px;font-size:17.75px;color:#000;">Online</div>
<div style="position:absolute;left:447px;top:559px;width:1313px;height:1px;background:#fafafa"></div>
<div style="position:absolute;left:447px;top:559px;width:1px;height:145px;background:#8a8a8a"></div>
<div style="position:absolute;left:450px;top:567px;width:110px;height:20px;background:#000058"></div>
<div style="position:absolute;left:560px;top:566px;width:2px;height:132px;background:#9a9a9a"></div>
<div style="position:absolute;left:562px;top:566px;width:1px;height:132px;background:#fafafa"></div>
<div style="position:absolute;left:450px;top:698px;width:112px;height:1px;background:#8a8a8a"></div>
<div style="position:absolute;left:448px;top:587px;width:112px;height:112px;background:#A0A0A0"></div>
<div class="hatch" style="left:456px;top:592px;width:99px;height:101px"></div>
<div class="t" style="left:461px;top:619.85px;font-size:17.75px;color:#000;letter-spacing:-0.5px;background:#fff;box-shadow:0 1.5px 0 #fff,0 -1.5px 0 #fff">100 MB</div>
<div class="t" style="left:461px;top:0;max-width:91px;overflow:hidden;top:642.50px;font-size:17.75px;letter-spacing:-0.15px;background:#fff;box-shadow:0 1.5px 0 #fff,0 -1.5px 0 #fff">Healthy (EF</div>
<div style="position:absolute;left:564px;top:567px;width:164px;height:20px;background:#000058"></div>
<div style="position:absolute;left:728px;top:566px;width:2px;height:132px;background:#9a9a9a"></div>
<div style="position:absolute;left:730px;top:566px;width:1px;height:132px;background:#fafafa"></div>
<div style="position:absolute;left:564px;top:698px;width:166px;height:1px;background:#8a8a8a"></div>
<div style="position:absolute;left:564px;top:587px;width:164px;height:1px;background:#a8a8a4"></div>
<div style="position:absolute;left:569px;top:592px;width:155px;height:100px;background:#fff;border-left:1px solid #8c8c8c;border-top:1px solid #8c8c8c;box-sizing:border-box"></div>
<div class="t" style="left:575px;top:619.85px;font-size:17.75px;color:#000;letter-spacing:-0.5px">900 MB</div>
<div class="t" style="left:575px;top:0;max-width:145px;overflow:hidden;top:642.50px;font-size:17.75px;letter-spacing:-0.15px">Healthy (Recovery</div>
<div style="position:absolute;left:732px;top:567px;width:306px;height:20px;background:#000058"></div>
<div style="position:absolute;left:1038px;top:566px;width:2px;height:132px;background:#9a9a9a"></div>
<div style="position:absolute;left:1040px;top:566px;width:1px;height:132px;background:#fafafa"></div>
<div style="position:absolute;left:732px;top:698px;width:308px;height:1px;background:#8a8a8a"></div>
<div style="position:absolute;left:732px;top:587px;width:306px;height:1px;background:#a8a8a4"></div>
<div style="position:absolute;left:737px;top:592px;width:297px;height:100px;background:#fff;border-left:1px solid #8c8c8c;border-top:1px solid #8c8c8c;box-sizing:border-box"></div>
<div class="t" style="left:742px;top:597.35px;font-size:17.75px;font-weight:bold;color:#000;">OS&nbsp; (C:)</div>
<div class="t" style="left:743px;top:619.85px;font-size:17.75px;color:#000;letter-spacing:-0.95px">279.01 GB NTFS</div>
<div class="t" style="left:743px;top:0;max-width:287px;overflow:hidden;top:642.50px;font-size:17.75px;letter-spacing:-0.15px">Healthy (Boot, Page File, Crash Dum</div>
<div style="position:absolute;left:1042px;top:567px;width:146px;height:20px;background:#000058"></div>
<div style="position:absolute;left:1188px;top:566px;width:2px;height:132px;background:#9a9a9a"></div>
<div style="position:absolute;left:1190px;top:566px;width:1px;height:132px;background:#fafafa"></div>
<div style="position:absolute;left:1042px;top:698px;width:148px;height:1px;background:#8a8a8a"></div>
<div style="position:absolute;left:1042px;top:587px;width:146px;height:1px;background:#a8a8a4"></div>
<div style="position:absolute;left:1047px;top:592px;width:137px;height:100px;background:#fff;border-left:1px solid #8c8c8c;border-top:1px solid #8c8c8c;box-sizing:border-box"></div>
<div class="t" style="left:1053px;top:619.85px;font-size:17.75px;color:#000;letter-spacing:-0.5px">450 MB</div>
<div class="t" style="left:1053px;top:0;max-width:127px;overflow:hidden;top:642.50px;font-size:17.75px;letter-spacing:-0.15px">Healthy (Recove</div>
<div style="position:absolute;left:1192px;top:567px;width:316px;height:20px;background:#000058"></div>
<div style="position:absolute;left:1508px;top:566px;width:2px;height:132px;background:#9a9a9a"></div>
<div style="position:absolute;left:1510px;top:566px;width:1px;height:132px;background:#fafafa"></div>
<div style="position:absolute;left:1192px;top:698px;width:318px;height:1px;background:#8a8a8a"></div>
<div style="position:absolute;left:1192px;top:587px;width:316px;height:1px;background:#a8a8a4"></div>
<div style="position:absolute;left:1197px;top:592px;width:307px;height:100px;background:#fff;border-left:1px solid #8c8c8c;border-top:1px solid #8c8c8c;box-sizing:border-box"></div>
<div class="t" style="left:1202px;top:597.35px;font-size:17.75px;font-weight:bold;color:#000;">Data&nbsp; (D:)</div>
<div class="t" style="left:1203px;top:619.85px;font-size:17.75px;color:#000;letter-spacing:-0.95px">398.07 GB NTFS</div>
<div class="t" style="left:1203px;top:0;max-width:297px;overflow:hidden;top:642.50px;font-size:17.75px;letter-spacing:-0.15px">Healthy (Primary Partition)</div>
<div style="position:absolute;left:1512px;top:567px;width:245px;height:20px;background:#000058"></div>
<div style="position:absolute;left:1757px;top:566px;width:2px;height:132px;background:#9a9a9a"></div>
<div style="position:absolute;left:1759px;top:566px;width:1px;height:132px;background:#fafafa"></div>
<div style="position:absolute;left:1512px;top:698px;width:247px;height:1px;background:#8a8a8a"></div>
<div style="position:absolute;left:1512px;top:587px;width:245px;height:1px;background:#a8a8a4"></div>
<div style="position:absolute;left:1517px;top:592px;width:236px;height:100px;background:#fff;border-left:1px solid #8c8c8c;border-top:1px solid #8c8c8c;box-sizing:border-box"></div>
<div class="t" style="left:1523px;top:619.85px;font-size:17.75px;color:#000;letter-spacing:-0.95px">20.01 GB</div>
<div class="t" style="left:1523px;top:0;max-width:226px;overflow:hidden;top:642.50px;font-size:17.75px;letter-spacing:-0.15px">Healthy (Recovery Partition)</div>
<div style="position:absolute;left:447px;top:708px;width:943px;height:1px;background:#fafafa"></div>
<div style="position:absolute;left:447px;top:708px;width:1px;height:146px;background:#8a8a8a"></div>
<div style="position:absolute;left:1388px;top:708px;width:2px;height:146px;background:#9a9a9a"></div>
<div style="position:absolute;left:450px;top:716px;width:932px;height:20px;background:#000058"></div>
<div style="position:absolute;left:1382px;top:715px;width:2px;height:132px;background:#9a9a9a"></div>
<div style="position:absolute;left:1384px;top:715px;width:1px;height:132px;background:#fafafa"></div>
<div style="position:absolute;left:450px;top:847px;width:934px;height:1px;background:#8a8a8a"></div>
<div style="position:absolute;left:450px;top:736px;width:932px;height:1px;background:#a8a8a4"></div>
<div style="position:absolute;left:455px;top:741px;width:923px;height:100px;background:#fff;border-left:1px solid #8c8c8c;border-top:1px solid #8c8c8c;box-sizing:border-box"></div>
<div class="t" style="left:461px;top:768.85px;font-size:17.75px;color:#000;letter-spacing:-0.95px">14.91 GB</div>
<div class="t" style="left:461px;top:0;max-width:913px;overflow:hidden;top:791.50px;font-size:17.75px;letter-spacing:-0.15px">Healthy (OEM Partition)</div>
<div style="position:absolute;left:1770px;top:113px;width:150px;height:877px;background:#fff;border-left:2px solid #575757;border-top:3px solid #575757;border-right:2px solid #dadada;border-bottom:2px solid #dadada;box-sizing:border-box"></div>
<div style="position:absolute;left:1772px;top:117px;width:146px;height:29px;background:#EBEBEB"></div>
<div style="position:absolute;left:1772px;top:146px;width:146px;height:2px;background:#7a7a7a"></div>
<div class="t" style="left:1780.6px;top:122.35px;font-size:17.75px;font-weight:bold;color:#000;letter-spacing:-0.6px">Actions</div>
<div style="position:absolute;left:1773px;top:149px;width:145px;height:37px;background:linear-gradient(#A4C2E8,#7199CC)"></div>
<div class="t" style="left:1783.75px;top:160.02px;font-size:21px;color:#0b0b1a;">Disk Ma...</div>
<svg style="position:absolute;left:1893px;top:163px" width="15" height="10"><path d="M7.5 0.5L14.5 9L0.5 9Z" fill="#000"/></svg>
<div class="t" style="left:1820px;top:194.45px;font-size:17.75px;color:#000;">More ...</div>
<svg style="position:absolute;left:1897px;top:197px" width="9" height="14"><path d="M0.5 0.5L8.5 7L0.5 13.5Z" fill="#000"/></svg>
</body></html>
